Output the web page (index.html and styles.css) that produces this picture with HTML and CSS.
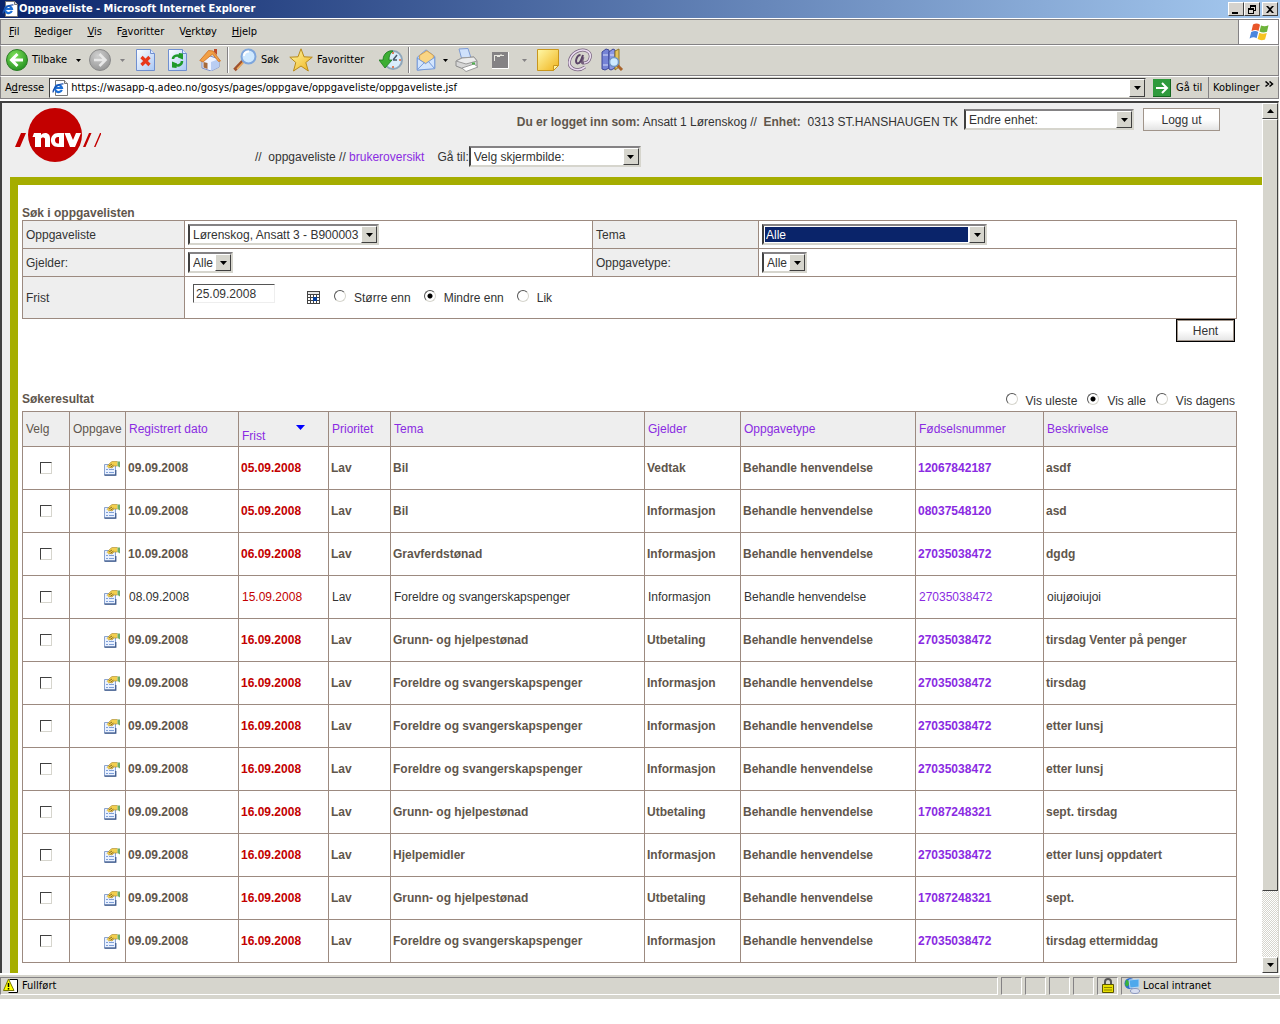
FILE: index.html
```html
<!DOCTYPE html>
<html lang="nb">
<head>
<meta charset="utf-8">
<title>Oppgaveliste</title>
<link rel="stylesheet" href="styles.css">
</head>
<body>
<svg class="defs" aria-hidden="true">
  <defs>
    <linearGradient id="blueSheet" x1="0" y1="0" x2="1" y2="1"><stop offset="0" stop-color="#fff"/><stop offset="1" stop-color="#a9c8f5"/></linearGradient>
    <radialGradient id="greenBall" cx=".4" cy=".3" r=".8"><stop offset="0" stop-color="#7fe05a"/><stop offset="1" stop-color="#1c8a1c"/></radialGradient>
    <radialGradient id="greyBall" cx=".4" cy=".3" r=".8"><stop offset="0" stop-color="#d0d0d0"/><stop offset="1" stop-color="#8f8f8f"/></radialGradient>
    <linearGradient id="gold" x1="0" y1="0" x2="1" y2="1"><stop offset="0" stop-color="#fff9a8"/><stop offset="1" stop-color="#f0b31c"/></linearGradient>
    <symbol id="down" viewBox="0 0 7 4"><path d="M0 0h7L3.5 4z" fill="currentColor"/></symbol>
    <symbol id="up" viewBox="0 0 7 4"><path d="M0 4h7L3.5 0z" fill="currentColor"/></symbol>
    <symbol id="ie" viewBox="0 0 16 16">
      <path d="M3.500.5h9l3 3v12h-12z" fill="#fff" stroke="#777"/><path d="M12.500.5v3h3" fill="#ddd" stroke="#777"/>
      <path d="M9.800 9.800A3.500 3.500 0 1 1 10 8H3.800" fill="none" stroke="#1c6fd6" stroke-width="2.200"/>
      <path d="M1 12.500C1 8 6 3.500 11.500 4" fill="none" stroke="#1c4fa8" stroke-width="1.200"/>
    </symbol>
    <symbol id="props" viewBox="0 0 16 15">
      <path d="M.5 3.500h11v10.500H.5z" fill="#e9f1ff" stroke="#8aa3cf"/><path d="M.5 14.200h11.300V9" fill="none" stroke="#3a5688" stroke-width="1.200"/>
      <path d="M2 8.500h2M5 8.500h5M2 11.500h2M5 11.500h5" stroke="#7fa0d8"/>
      <path d="M3 5.500L6 2l2-1.500h5.500v4.500H10L8 7 6.500 6.500 4.500 7z" fill="#f3cf4e"/>
      <path d="M3 5.500L6 2l2-1.500h5.500M13.500 5H10L8 7 6.500 6.500 4.500 7" fill="none" stroke="#a8862a" stroke-width=".6"/>
      <path d="M5 5l3-2M6.500 6.200l3-2" stroke="#7a6222" stroke-width=".9"/><path d="M13.500.5H16v6l-2.500-1.500z" fill="#6fae6a"/>
    </symbol>
  </defs>
</svg>

<header class="titlebar">
  <svg class="i16"><use href="#ie"/></svg>
  <h1>Oppgaveliste - Microsoft Internet Explorer</h1>
  <div class="winbtns">
    <button type="button" aria-label="Minimer"><svg viewBox="0 0 10 9"><path d="M1 7h6v2H1z"/></svg></button>
    <button type="button" aria-label="Gjenopprett"><svg viewBox="0 0 10 9"><path d="M3 0h6v6H7V5h1V2H4v1H3zM1 3h6v6H1zm1 2v3h4V5z" fill-rule="evenodd"/></svg></button>
    <button type="button" aria-label="Lukk" class="close"><svg viewBox="0 0 10 9"><path d="M1 1h2l2 2 2-2h2L6 4.500 9 8H7L5 6 3 8H1l3-3.500z"/></svg></button>
  </div>
</header>

<nav class="menubar" aria-label="Meny">
  <div class="menus"><button type="button"><u>F</u>il</button><button type="button"><u>R</u>ediger</button><button type="button"><u>V</u>is</button><button type="button">F<u>a</u>voritter</button><button type="button">V<u>e</u>rktøy</button><button type="button"><u>H</u>jelp</button></div>
  <div class="flag"><svg viewBox="0 0 20 18"><path d="M4 1.500c3-1.500 5-1 7 .3L9.500 8C7.500 6.800 5.500 6.800 2.500 8z" fill="#e8562a"/><path d="M12 2.500c3 1.200 4.500 1 7.500-.2L18 8.800c-3 1.200-5 1-7.500-.2z" fill="#6db33a"/><path d="M2.200 9c3-1.200 5-1.200 7 0l-1.600 6.200c-2-1.200-4-1.200-7 .2z" fill="#4a86dd"/><path d="M10.300 9.800c2.500 1.200 4.500 1.200 7.500.2L16 16.500c-3 1-5 .8-7.400-.4z" fill="#f6c321"/></svg></div>
</nav>

<div class="toolbar">
  <button type="button" class="t-back"><svg class="i22" viewBox="0 0 22 22"><circle cx="11" cy="11" r="10.500" fill="url(#greenBall)" stroke="#2c7d25"/><path d="M11.500 5L5.500 11l6 6M6 11h11" fill="none" stroke="#fff" stroke-width="3"/></svg>Tilbake</button>
  <button type="button" class="t-caret" aria-label="Tilbake-liste"><svg class="caret"><use href="#down"/></svg></button>
  <button type="button" class="t-icon28" aria-label="Frem"><svg class="i22" viewBox="0 0 22 22"><circle cx="11" cy="11" r="10.500" fill="url(#greyBall)" stroke="#8a8a8a"/><path d="M10.500 5l6 6-6 6M16 11H5" fill="none" stroke="#e8e8e8" stroke-width="2.500"/></svg></button>
  <button type="button" class="t-caret off" aria-label="Frem-liste"><svg class="caret"><use href="#down"/></svg></button>
  <button type="button" class="t-icon" aria-label="Stopp"><svg class="i22" viewBox="0 0 22 22"><path d="M1.500.5h14l4 4v17h-18z" fill="url(#blueSheet)" stroke="#6f8fd0"/><path d="M15.500.5v4h4" fill="#dfeaff" stroke="#6f8fd0"/><path d="M6.500 8l8 8M14.500 8l-8 8" stroke="#e8381c" stroke-width="3.200"/></svg></button>
  <button type="button" class="t-icon" aria-label="Oppdater"><svg class="i22" viewBox="0 0 22 22"><path d="M1.500.5h14l4 4v17h-18z" fill="url(#blueSheet)" stroke="#6f8fd0"/><path d="M15.500.5v4h4" fill="#dfeaff" stroke="#6f8fd0"/><path d="M6 10c0-3 4-4.500 7-2.500" fill="none" stroke="#1f9a2b" stroke-width="2.500"/><path d="M12 4l4 .5v6l-5-2z" fill="#1f9a2b"/><path d="M15 12c0 4-4 5.500-7 3.500" fill="none" stroke="#1f9a2b" stroke-width="2.500"/><path d="M9.500 19l-4.500-.5v-6l5 2z" fill="#1f9a2b"/></svg></button>
  <button type="button" class="t-icon" aria-label="Hjem"><svg class="i22" viewBox="0 0 22 22"><path d="M3 11l5-5 12 4v8l-8 4-9-3z" fill="#eef3ff" stroke="#7c8fc8"/><path d="M12 13v9l8-4v-8z" fill="#b9cdf2"/><path d="M4.500 13l4 1v6l-4-1.500z" fill="#a66a3c"/><path d="M15 3V0h3v6z" fill="#c04b28"/><path d="M.8 11.500L9.500 1.500l4.500.500 7.500 10-2 .5-6-7.500L4 13z" fill="#f2a044" stroke="#cf6e22" stroke-width=".8"/></svg></button>
  <span class="sep"></span>
  <button type="button" class="t-search"><svg class="i24" viewBox="0 0 24 24"><path d="M10 13l-8.500 9" stroke="#a0522d" stroke-width="3.500"/><path d="M10.500 14L4 21" stroke="#f0b060" stroke-width="1.200"/><circle cx="15.500" cy="8.500" r="7" fill="#cfe9ff" stroke="#7ea6dc" stroke-width="2"/><path d="M11 8c0-3 2-4.500 5-4.500" fill="none" stroke="#fff" stroke-width="2"/></svg>Søk</button>
  <button type="button" class="t-fav"><svg class="i24" viewBox="0 0 24 24"><path d="M12 .8l3 8 8.300.4-6.500 5.300 2.500 8.500L12 18l-7.500 5 2.300-8.500L.8 9.200 9 8.800z" fill="url(#gold)" stroke="#b88a1a"/></svg>Favoritter</button>
  <button type="button" class="t-icon" aria-label="Logg"><svg class="i24" viewBox="0 0 24 24"><circle cx="14" cy="12" r="9" fill="#d9edfb" stroke="#8fa6ba" stroke-width="2"/><path d="M14 12l4-5M14 12h4" stroke="#47596b" stroke-width="1.500"/><path d="M14 18v2M20 12h2M14 4v2" stroke="#e06030" stroke-width="1.500"/><path d="M0 12h4c0-6 5-10 10-9-3 2-4 5-4 9h3l-7 8z" fill="#3dae34" stroke="#1c7a20" stroke-width=".8"/></svg></button>
  <span class="sep"></span>
  <button type="button" class="t-icon28" aria-label="E-post"><svg class="i22" viewBox="0 0 22 24"><path d="M1.500 9L11 1l9.500 7v13l-19 2z" fill="#b5d2f8" stroke="#6e95d6"/><path d="M4 7l8-5 7 5v5l-8 4-7-4z" fill="#f9d584" stroke="#d9a045"/><path d="M1.500 10l9 6 10-7v12.500l-19 1.500z" fill="#d3e5fd" stroke="#6e95d6"/><path d="M2 22l7-7M20 21l-6-7" stroke="#6e95d6"/></svg></button>
  <button type="button" class="t-tight" aria-label="E-post-liste"><svg class="caret"><use href="#down"/></svg></button>
  <button type="button" class="t-print" aria-label="Skriv ut"><svg class="i24" viewBox="0 0 24 24"><path d="M4 1l9-.5L16 10l-9 2z" fill="#cfe1fb" stroke="#7d9bd4"/><path d="M1 13l6-3 12-1 3 4v5l-11 4-10-4z" fill="#d6d6d6" stroke="#8c8c8c"/><path d="M1 13l6-3 12-1 3 4-11 3z" fill="#ececec" stroke="#9a9a9a"/><path d="M7 20l12-4 4 3-12 4.500z" fill="#fff" stroke="#999"/><path d="M17 15.500h3" stroke="#4db04d" stroke-width="2"/></svg></button>
  <button type="button" class="t-icon" aria-label="Rediger side"><svg class="i18" viewBox="0 0 18 18"><path d="M17.500 1v16.500H1" fill="none" stroke="#fff"/><path d="M1 1h16v16H1z" fill="#848284"/><path d="M3 4.500h10M3.500 4v6M10 3v2M6 5.500h3" stroke="#e8e8e0"/></svg></button>
  <button type="button" class="t-caret off" aria-label="Rediger-liste"><svg class="caret"><use href="#down"/></svg></button>
  <button type="button" class="t-icon" aria-label="Notat"><svg class="i22" viewBox="0 0 22 22"><path d="M.5.5h21v16l-5 5H.5z" fill="url(#gold)" stroke="#c8961c"/><path d="M16.500 21.500v-5h5z" fill="#fff3a0" stroke="#c8961c"/></svg></button>
  <button type="button" class="t-icon" aria-label="Diskuter"><svg class="i24" viewBox="0 0 24 24"><path d="M17 19C9 25 0 20 1.500 13 3 5 12 0 19 3c6 3 3 12-3 12-3 0-2-3-1-6" fill="none" stroke="#75607d" stroke-width="3"/><path d="M17 19C9 25 0 20 1.500 13 3 5 12 0 19 3c6 3 3 12-3 12" fill="none" stroke="#eadcf0" stroke-width="1.600"/><path d="M12.500 7c-4 0-6 8-3 8.500 3 0 4-4 5.500-8.500" fill="none" stroke="#5b4567" stroke-width="2"/></svg></button>
  <button type="button" class="t-icon" aria-label="Referanse"><svg class="i24" viewBox="0 0 24 24"><path d="M2 4l4-3 3 1v18l-4 2-3-1z" fill="#7583d6" stroke="#3d4796"/><path d="M9 4l4-3 2 1v18l-4 2-2-1z" fill="#8b98e4" stroke="#3d4796"/><path d="M15 3l4-2v18l-4 3z" fill="#e3c35a" stroke="#8f7628"/><path d="M3 7h5M3 17h5M10 7h4" stroke="#d8def8"/><path d="M17 17l5 5" stroke="#a8642c" stroke-width="3"/><circle cx="14" cy="14" r="4.500" fill="#cdeaff" stroke="#6f94c0" stroke-width="1.500"/></svg></button>
</div>

<form class="addressbar">
  <label for="url">A<u>d</u>resse</label>
  <div class="urlbox">
    <svg class="i16"><use href="#ie"/></svg>
    <input id="url" type="text" value="https://wasapp-q.adeo.no/gosys/pages/oppgave/oppgaveliste/oppgaveliste.jsf">
    <button type="button" class="drop" aria-label="Vis adresser"><svg class="tri"><use href="#down"/></svg></button>
  </div>
  <button type="button" class="go"><svg class="i18" viewBox="0 0 18 18"><path d="M0 0h18v18H0z" fill="#2f9a3c"/><path d="M0 17.500h17.500V0" fill="none" stroke="#14661f"/><path d="M9 4l5 5-5 5M14 9H3" fill="none" stroke="#fff" stroke-width="2"/></svg>Gå til</button>
  <button type="button" class="links"><span>Koblinger</span><svg viewBox="0 0 9 7"><path d="M.5.5L3.500 3 .5 5.500M4.500.5L7.500 3 4.500 5.500" fill="none" stroke="#000" stroke-width="1.500"/></svg></button>
</form>

<div class="viewport">
  <div class="page">
    <header class="apphead">
      <svg class="logo" viewBox="0 0 86 54" role="img" aria-label="NAV">
        <circle cx="40" cy="27" r="27" fill="#c30000"/>
        <path d="M0 39L6 25h5L5 39zM68 39l6-14h2.500l-6 14zM79 39l6-14h1.500l-6 14z" fill="#c30000"/>
        <g fill="#fff">
          <path d="M17.500 29l1.500-4h7v2c2-3 9-3 9 3v9h-5v-8c0-2-4-2-4 0v8h-6V29z"/>
          <path d="M49 25v14h-6c-10 0-9-14 0-14z"/>
          <path d="M49.500 25h5.500l3 7 3-7h5l-6 14h-5z"/>
        </g>
        <path d="M44 29v6.500h-1c-4 0-4-6.500 0-6.500z" fill="#c30000"/>
      </svg>
      <div class="headrows">
        <div class="userrow">
          <p><b>Du er logget inn som:</b> Ansatt 1 Lørenskog //&nbsp; <b>Enhet:</b>&nbsp; 0313 ST.HANSHAUGEN TK</p>
          <span class="combo w-unit"><select aria-label="Endre enhet"><option>Endre enhet:</option></select><span class="drop"><svg class="tri"><use href="#down"/></svg></span></span>
          <button type="button" class="btn">Logg ut</button>
        </div>
        <div class="navrow">
          <span>//&nbsp; oppgaveliste //&nbsp;<a href="#bruker">brukeroversikt</a></span>
          <label for="goto">Gå til:</label><span class="combo w-goto"><select id="goto"><option>Velg skjermbilde:</option></select><span class="drop"><svg class="tri"><use href="#down"/></svg></span></span>
        </div>
      </div>
    </header>

    <main>
      <h2>Søk i oppgavelisten</h2>
      <form>
        <table class="search">
          <colgroup><col class="s1"><col class="s2"><col class="s3"><col></colgroup>
          <tr>
            <th scope="row"><label for="f1">Oppgaveliste</label></th>
            <td><span class="combo w-list"><select id="f1"><option>Lørenskog, Ansatt 3 - B900003</option></select><span class="drop"><svg class="tri"><use href="#down"/></svg></span></span></td>
            <th scope="row"><label for="f2">Tema</label></th>
            <td><span class="combo w-tema"><select id="f2" class="chosen"><option>Alle</option></select><span class="drop"><svg class="tri"><use href="#down"/></svg></span></span></td>
          </tr>
          <tr>
            <th scope="row"><label for="f3">Gjelder:</label></th>
            <td><span class="combo w-all"><select id="f3"><option>Alle</option></select><span class="drop"><svg class="tri"><use href="#down"/></svg></span></span></td>
            <th scope="row"><label for="f4">Oppgavetype:</label></th>
            <td><span class="combo w-all"><select id="f4"><option>Alle</option></select><span class="drop"><svg class="tri"><use href="#down"/></svg></span></span></td>
          </tr>
          <tr class="due">
            <th scope="row"><label for="f5">Frist</label></th>
            <td colspan="3"><div class="duerow">
              <input id="f5" class="date" type="text" value="25.09.2008">
              <button type="button" class="cal" aria-label="Velg dato"><svg viewBox="0 0 13 13"><path d="M0 0h13v13H0z" fill="#444"/><path d="M1 1h11v2H1z" fill="#e6e6e6"/><path d="M1 4h2v2H1zM4 4h2v2H4zM7 4h2v2H7zM10 4h2v2h-2zM1 7h2v2H1zM4 7h2v2H4zM10 7h2v2h-2zM1 10h2v2H1zM4 10h2v2H4zM7 10h2v2H7zM10 10h2v2h-2z" fill="#fff"/><path d="M6 6h4v4H6z" fill="#003c9c"/></svg></button>
              <label class="radio"><input type="radio" name="cmp">Større enn</label>
              <label class="radio"><input type="radio" name="cmp" checked>Mindre enn</label>
              <label class="radio"><input type="radio" name="cmp">Lik</label>
            </div></td>
          </tr>
        </table>
        <div class="submit"><button type="button" class="btn default">Hent</button></div>
      </form>

      <div class="resulthead">
        <h2>Søkeresultat</h2>
        <div class="views">
          <label class="radio"><input type="radio" name="view">Vis uleste</label>
          <label class="radio"><input type="radio" name="view" checked>Vis alle</label>
          <label class="radio"><input type="radio" name="view">Vis dagens</label>
        </div>
      </div>
      <table class="results">
        <colgroup><col class="c1"><col class="c2"><col class="c3"><col class="c4"><col class="c5"><col class="c6"><col class="c7"><col class="c8"><col class="c9"><col></colgroup>
        <thead><tr><th>Velg</th><th>Oppgave</th><th><a href="#s1">Registrert dato</a></th><th><span class="sorted"><a href="#s2">Frist</a><svg viewBox="0 0 9 5"><path d="M0 0h9L4.500 5z" fill="#00f"/></svg></span></th><th><a href="#s3">Prioritet</a></th><th><a href="#s4">Tema</a></th><th><a href="#s5">Gjelder</a></th><th><a href="#s6">Oppgavetype</a></th><th><a href="#s7">Fødselsnummer</a></th><th><a href="#s8">Beskrivelse</a></th></tr></thead>
        <tbody id="rows"></tbody>
      </table>
    </main>
  </div>
  <div class="scrollbar" aria-hidden="true">
    <span class="arrow"><svg class="tri"><use href="#up"/></svg></span>
    <span class="thumb"></span><span class="track"></span>
    <span class="arrow"><svg class="tri"><use href="#down"/></svg></span>
  </div>
</div>

<footer class="status">
  <div class="pane grow"><svg class="i16" viewBox="0 0 16 16"><path d="M6.500 1.500h8v13h-9" fill="#fff" stroke="#000"/><path d="M5.500 1L11 12.500H.5z" fill="#ff0" stroke="#777700"/><path d="M5.500 5v4M5.500 10v1.500" stroke="#000" stroke-width="1.500"/></svg>Fullført</div>
  <div class="pane"></div><div class="pane"></div><div class="pane"></div><div class="pane"></div>
  <div class="pane"><svg class="i16" viewBox="0 0 16 16"><path d="M5 8V4c0-4 6-4 6 0v4" fill="none" stroke="#555" stroke-width="2"/><path d="M2.500 6.500h11v8h-11z" fill="#e8e000" stroke="#5a5600"/><path d="M4 9.500h8M4 12h8" stroke="#8a8400"/></svg></div>
  <div class="pane zone"><svg class="i16" viewBox="0 0 16 16"><circle cx="6" cy="5.500" r="5.500" fill="#2f6fd0"/><path d="M2 2c2 0 4 1 3 4s-2 3-4 1z" fill="#38b13c"/><path d="M5 2l10-1v8l-9 1z" fill="#4fa8ec" stroke="#b9d6f2"/><ellipse cx="11" cy="13" rx="4.500" ry="2.500" fill="#d8def0" stroke="#8b97bd"/></svg>Local intranet</div>
</footer>
<script src="rows.js"></script>
</body>
</html>
```
FILE: rows.js
```js
const tasks = [
  ["09.09.2008", "05.09.2008", "Bil", "Vedtak", "12067842187", "asdf"],
  ["10.09.2008", "05.09.2008", "Bil", "Informasjon", "08037548120", "asd"],
  ["10.09.2008", "06.09.2008", "Gravferdstønad", "Informasjon", "27035038472", "dgdg"],
  ["08.09.2008", "15.09.2008", "Foreldre og svangerskapspenger", "Informasjon", "27035038472", "oiujøoiujoi", true],
  ["09.09.2008", "16.09.2008", "Grunn- og hjelpestønad", "Utbetaling", "27035038472", "tirsdag Venter på penger"],
  ["09.09.2008", "16.09.2008", "Foreldre og svangerskapspenger", "Informasjon", "27035038472", "tirsdag"],
  ["09.09.2008", "16.09.2008", "Foreldre og svangerskapspenger", "Informasjon", "27035038472", "etter lunsj"],
  ["09.09.2008", "16.09.2008", "Foreldre og svangerskapspenger", "Informasjon", "27035038472", "etter lunsj"],
  ["09.09.2008", "16.09.2008", "Grunn- og hjelpestønad", "Utbetaling", "17087248321", "sept. tirsdag"],
  ["09.09.2008", "16.09.2008", "Hjelpemidler", "Informasjon", "27035038472", "etter lunsj oppdatert"],
  ["09.09.2008", "16.09.2008", "Grunn- og hjelpestønad", "Utbetaling", "17087248321", "sept."],
  ["09.09.2008", "16.09.2008", "Foreldre og svangerskapspenger", "Informasjon", "27035038472", "tirsdag ettermiddag"]
];
document.getElementById("rows").innerHTML = tasks.map(([reg, due, theme, about, id, text, read]) => `
<tr class="${read ? "read" : "unread"}">
<td class="pick"><input type="checkbox" aria-label="Velg oppgave"></td>
<td class="open"><a href="#oppgave" aria-label="Åpne oppgave"><svg><use href="#props"/></svg></a></td>
<td>${reg}</td><td class="late">${due}</td><td>Lav</td><td>${theme}</td><td>${about}</td>
<td>Behandle henvendelse</td><td><a href="#person">${id}</a></td><td>${text}</td></tr>`).join("");
```
FILE: styles.css
```css
* { box-sizing: border-box; }
body {
  margin: 0;
  background: #fff;
  color: #000;
  font: 11px/14px "DejaVu Sans Condensed", "Noto Sans", sans-serif;
}
h1, h2, p { margin: 0; font-size: inherit; }
button, input, select { font: inherit; color: inherit; margin: 0; padding: 0; border: 0; background: none; border-radius: 0; }
svg { display: block; flex: none; }
table { border-collapse: collapse; table-layout: fixed; width: 100%; }
.defs { position: absolute; width: 0; height: 0; }
.i16 { width: 16px; height: 16px; }
.i18 { width: 18px; height: 18px; }
.i22 { width: 22px; height: 22px; }
.i24 { width: 24px; height: 24px; }
.tri { width: 7px; height: 4px; }
.caret { width: 5px; height: 3px; }

/* browser window */
.titlebar {
  display: flex; align-items: center; gap: 1px; height: 18px; padding: 0 2px;
  background: linear-gradient(90deg, #0a246a, #a6caf0); color: #fff;
}
.winbtns { display: flex; margin-left: auto; }
.winbtns button {
  width: 16px; height: 14px; display: grid; place-items: center;
  background: #d6d3ce; border: 1px solid; border-color: #fff #404040 #404040 #fff;
}
.winbtns svg { width: 10px; height: 9px; }
.winbtns .close { margin-left: 2px; }
.menubar, .toolbar, .addressbar { display: flex; background: #d6d5cd; border-left: 1px solid #848284; border-right: 1px solid #848284; margin-right: 1px; }
.menubar { height: 26px; margin-top: 1px; border-top: 1px solid #848284; border-bottom: 1px solid #848284; }
.menus { display: flex; gap: 15px; flex: 1; padding-left: 8px; }
.flag { width: 40px; background: #fff; border-left: 1px solid #848284; display: grid; place-items: center; }
.flag svg { width: 20px; height: 18px; }
.toolbar { height: 31px; align-items: center; padding: 0 0 1px 3px; border-top: 1px solid #fff; border-bottom: 1px solid #848284; }
.toolbar button { height: 28px; display: flex; align-items: center; justify-content: center; gap: 4px; }
.toolbar .t-back { width: 66px; justify-content: flex-start; padding-left: 2px; }
.toolbar .t-search { width: 56px; justify-content: flex-start; padding-left: 2px; }
.toolbar .t-fav { width: 88px; justify-content: flex-start; padding-left: 2px; }
.t-caret { width: 16px; }
.t-tight { width: 10px; }
.t-icon28 { width: 28px; }
.t-icon { width: 32px; }
.t-print { width: 34px; }
.off { color: #848284; }
.sep { width: 2px; height: 26px; margin: 0 2px 0 1px; background: #fff; border-left: 1px solid #848284; }
.addressbar { height: 23px; border-top: 1px solid #fff; border-bottom: 1px solid #848284; align-items: center; padding-left: 4px; }
.urlbox {
  flex: 1; display: flex; align-items: center; height: 20px; margin-left: 5px; padding-left: 2px; gap: 3px;
  background: #fff; border: 1px solid; border-color: #404040 #d6d5cd #d6d5cd #404040;
}
.urlbox input { flex: 1; min-width: 0; outline: none; }
.drop, .urlbox .drop {
  width: 16px; height: 100%; display: grid; place-items: center; flex: none;
  background: #d6d5cd; border: 1px solid; border-color: #fff #404040 #404040 #fff; color: #000;
}
.go { display: flex; align-items: center; gap: 5px; width: 62px; padding-left: 7px; height: 100%; }
.links { display: flex; gap: 5px; width: 70px; padding-left: 4px; height: 100%; align-items: center; border-left: 1px solid #848284; }
.links svg { width: 9px; height: 7px; align-self: flex-start; margin-top: 4px; }

/* document area */
.viewport {
  display: flex; margin: 2px 1px 0 0; border: 2px solid #404040; border-right: 1px solid #d6d5cd; border-bottom: 0;
  background: #eee;
}
.page { flex: 1; min-width: 0; font: 12px/14px "Liberation Sans", Arial, sans-serif; color: #333; }
a { color: #8a2be2; text-decoration: none; }
b, h2 { color: #5f564c; font-weight: bold; }
.apphead { display: flex; align-items: flex-start; padding: 5px 42px 0 13px; height: 74px; }
.logo { width: 86px; height: 54px; }
.headrows { flex: 1; display: flex; flex-direction: column; gap: 15px; }
.userrow { display: flex; justify-content: flex-end; align-items: center; }
.userrow .combo { margin: 0 9px 0 6px; }
.userrow p { padding-top: 5px; }
.navrow { display: flex; align-items: center; padding-left: 154px; }
.navrow label { margin-left: 13px; }
.combo { display: inline-grid; height: 21px; background: #fff; border: 2px solid; border-color: #848284 #d6d5cd #d6d5cd #404040; vertical-align: middle; }
.combo select, .combo .drop { grid-area: 1 / 1; }
.combo select { appearance: none; width: 100%; padding: 0 3px; outline: none; color: #333; }
.combo .drop { justify-self: end; pointer-events: none; }
.combo .chosen { color: #fff; background: #0a246a; border: 1px dotted #d8b060; outline: 1px solid #fff; outline-offset: -1px; width: calc(100% - 16px); padding: 0 1px; }
.w-unit { width: 170px; }
.w-goto { width: 172px; }
.w-list { width: 191px; }
.w-tema { width: 225px; }
.w-all { width: 45px; }
.btn {
  min-width: 77px; height: 23px; border: 1px solid #a0948a;
  background: linear-gradient(#fff 50%, #e4e4e4); color: #333;
}
.btn.default { min-width: 59px; border: 1px solid #000; box-shadow: inset 0 0 0 1px #a0948a; }

main { margin-left: 8px; padding: 21px 25px 10px 4px; background: #fff; border-top: 8px solid #a5ad00; border-left: 8px solid #a5ad00; }
th, td { border: 1px solid #9c8a80; text-align: left; font-weight: normal; padding: 0 3px; }
th { background: #eee; }
.search td { height: 28px; background: #fff; }
.search .due td { height: 42px; }
.search .combo { display: grid; }
.s1 { width: 162px; }
.s2 { width: 408px; }
.s3 { width: 166px; }
.duerow { display: flex; align-items: center; padding-left: 5px; }
.date { width: 82px; height: 19px; margin: 0 32px 8px 0; padding: 0 2px; border: 1px solid; border-color: #555 #eee #eee #555; outline: none; }
.cal { width: 13px; height: 13px; margin-right: 14px; }
.cal svg { width: 13px; height: 13px; }
.radio { display: flex; gap: 8px; line-height: 16px; }
.duerow .radio { margin-right: 13px; }
.views { display: flex; gap: 10px; padding: 0 2px 2px 0; }
input[type=radio] {
  appearance: none; width: 12px; height: 12px; border-radius: 50%; background: #fff; flex: none;
  border: 1px solid; border-color: #555 #d6d5cd #d6d5cd #555;
}
input[type=radio]:checked { background: radial-gradient(circle, #000 2px, #fff 3px); }
.submit { display: flex; justify-content: flex-end; padding-right: 2px; }
.resulthead { display: flex; justify-content: space-between; align-items: flex-end; margin-top: 50px; height: 19px; }
.resulthead h2 { align-self: flex-start; }

.c1 { width: 47px; }
.c2 { width: 56px; }
.c3 { width: 113px; }
.c4 { width: 90px; }
.c5 { width: 62px; }
.c6 { width: 254px; }
.c7 { width: 96px; }
.c8 { width: 175px; }
.c9 { width: 128px; }
.results th { height: 35px; color: #5f564c; white-space: nowrap; }
.results td { height: 43px; background: #fff; }
.sorted { display: flex; justify-content: space-between; align-items: flex-start; padding-right: 20px; }
.sorted a { padding-top: 13px; }
.sorted svg { width: 9px; height: 5px; margin-top: 9px; }
.unread { color: #5f564c; }
.unread td { font-weight: bold; padding: 0 2px; }
.results .late { color: #c30000; }
.results .pick, .results .open { padding: 0 5px; }
.pick input {
  appearance: none; display: block; width: 12px; height: 12px; margin: 0 auto; background: #fff;
  border: 1px solid; border-color: #404040 #d6d5cd #d6d5cd #404040;
}
.open svg { width: 16px; height: 15px; margin-left: auto; }

.scrollbar { width: 16px; display: flex; flex-direction: column; background: #e9e8e4; }
.arrow { height: 16px; display: grid; place-items: center; }
.arrow, .thumb { background: #d6d5cd; border: 1px solid; border-color: #fff #404040 #404040 #fff; }
.thumb { flex: 772; }
.track { flex: 66; background: repeating-conic-gradient(#fff 0 25%, #d6d5cd 0 50%) 0 0 / 2px 2px; }

.status { display: flex; gap: 3px; background: #d6d5cd; border-top: 1px solid #fff; padding: 2px 0 4px; margin-top: 1px; }
.pane { width: 21px; height: 18px; display: flex; align-items: center; gap: 3px; padding-left: 2px; border: 1px solid; border-color: #848284 #fff #fff #848284; }
.grow { flex: 1; }
.zone { width: 159px; }
```
